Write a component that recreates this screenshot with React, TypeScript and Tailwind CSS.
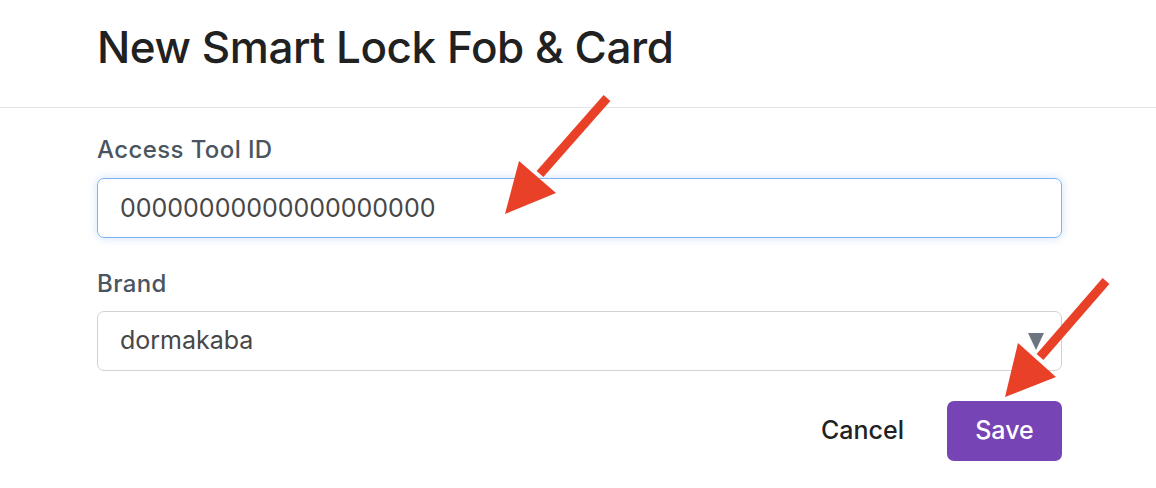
import { useState } from 'react';

const RED = '#e94128';

function Arrows() {
  return (
    <svg
      className="pointer-events-none absolute inset-0"
      width="1156"
      height="488"
      viewBox="0 0 1156 488"
    >
      {/* arrow towards the ID field */}
      <line x1="607" y1="98" x2="540" y2="174" stroke={RED} strokeWidth="9" />
      <polygon points="505,214 519,161 556,193" fill={RED} />
      {/* arrow towards save */}
      <line x1="1106" y1="281" x2="1040" y2="357" stroke={RED} strokeWidth="9" />
      <polygon points="1005,397 1018,343 1056,377" fill={RED} />
    </svg>
  );
}

export default function App() {
  const [toolId, setToolId] = useState('00000000000000000000');
  const [brand, setBrand] = useState('dormakaba');

  return (
    <div
      className="relative h-[488px] w-[1156px] overflow-hidden bg-white"
      style={{ fontFamily: 'Inter, "Noto Sans", sans-serif' }}
    >
      {/* Header */}
      <div className="h-[108px] border-b border-[#e5e5e5] pl-[97px] pt-[21px]">
        <h1 className="text-[44px] font-medium leading-[53px] tracking-[-0.45px] text-[#212121]">
          New Smart Lock Fob &amp; Card
        </h1>
      </div>

      {/* Body */}
      <div className="w-[965px] ml-[97px] pt-[27px]">
        <label className="block text-[24px] font-medium leading-[29px] tracking-[0.4px] text-[#4a5561]">
          Access Tool ID
        </label>
        <input
          value={toolId}
          onChange={(e) => setToolId(e.target.value)}
          className="mt-[14px] block h-[60px] w-full rounded-[7px] border border-[#80b4f0] px-[22px] text-[25px] text-[#474747] shadow-[0_0_10px_rgba(100,160,240,0.3)] outline-none"
        />

        <label className="mt-[31px] block text-[24px] font-medium leading-[29px] tracking-[0.4px] text-[#4a5561]">
          Brand
        </label>
        <div className="relative mt-[13px]">
          <select
            value={brand}
            onChange={(e) => setBrand(e.target.value)}
            className="block h-[60px] w-full appearance-none rounded-[7px] border border-[#d2d2d2] bg-white px-[22px] text-[25px] text-[#474747] outline-none"
          >
            <option value="dormakaba">dormakaba</option>
            <option value="salto">Salto</option>
            <option value="assa">ASSA ABLOY</option>
          </select>
          <svg
            className="pointer-events-none absolute right-[18px] top-[22px]"
            width="16"
            height="17"
            viewBox="0 0 16 17"
          >
            <polygon points="0,0 16,0 8,17" fill="#6b7680" />
          </svg>
        </div>

        <div className="mt-[30px] flex items-center justify-end gap-[43px]">
          <button className="text-[25px] font-medium text-[#222]">Cancel</button>
          <button className="h-[60px] w-[115px] rounded-[7px] bg-[#7644b4] text-[25px] font-medium text-white">
            Save
          </button>
        </div>
      </div>

      <Arrows />
    </div>
  );
}
